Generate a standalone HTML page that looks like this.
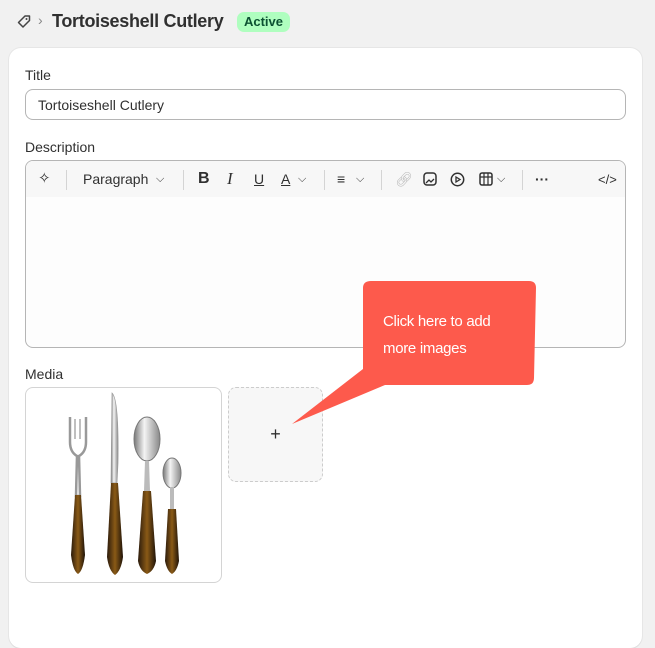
<!DOCTYPE html>
<html><head><meta charset="utf-8"><style>
*{box-sizing:border-box;margin:0;padding:0}
body{width:655px;height:596px;overflow:hidden;background:#f1f1f1;font-family:"Liberation Sans",sans-serif;color:#303030;position:relative}
.abs{position:absolute}
.card{left:9px;top:48px;width:633px;height:600px;background:#fff;border-radius:12px;box-shadow:0 1px 0 #ddd,0 0 0 1px #e6e6e6}
.lbl{font-size:14px;color:#303030}
.inp{left:25px;top:89px;width:601px;height:31px;border:1px solid #b5b5b5;border-radius:8px;font-size:14px;padding:7px 12px;color:#303030}
.ed{left:25px;top:160px;width:601px;height:188px;border:1px solid #b5b5b5;border-radius:8px;overflow:hidden;background:#fdfdfd}
.tb{height:36px;background:#f7f7f7;position:relative}
.sep{position:absolute;top:9px;width:1px;height:20px;background:#d4d4d4}
.tb span{position:absolute;top:10px;font-size:14px;color:#303030}
</style></head><body>
<svg class="abs" style="left:16px;top:14px" width="16" height="16" viewBox="0 0 16 16"><path d="M9 2h4.5v4.5L7 13 2.5 8.5z" fill="none" stroke="#444" stroke-width="1.5" stroke-linejoin="round"/><circle cx="10.5" cy="5" r="1" fill="#444"/></svg>
<div class="abs" style="left:38px;top:12px;font-size:14px;color:#888">›</div>
<div class="abs" style="left:52px;top:11px;font-size:18px;font-weight:bold;color:#303030;letter-spacing:-0.3px">Tortoiseshell Cutlery</div>
<div class="abs" style="left:237px;top:12px;width:53px;height:20px;background:#affebf;border-radius:7px;font-size:13px;font-weight:bold;color:#0c5132;text-align:center;line-height:20px">Active</div>
<div class="abs card"></div>
<div class="abs lbl" style="left:25px;top:67px">Title</div>
<div class="abs inp">Tortoiseshell Cutlery</div>
<div class="abs lbl" style="left:25px;top:139px">Description</div>
<div class="abs ed"><div class="tb">
<span style="left:12px;top:8px;font-size:15px">✧</span>
<div class="sep" style="left:40px"></div>
<span style="left:57px">Paragraph</span><span style="left:130px;font-size:11px;top:12px">⌵</span>
<div class="sep" style="left:157px"></div>
<span style="left:172px;font-weight:bold;font-size:16px;top:9px">B</span>
<span style="left:201px;font-style:italic;font-family:'Liberation Serif';font-size:17px;top:8px">I</span>
<span style="left:228px;text-decoration:underline">U</span>
<span style="left:255px;text-decoration:underline">A</span><span style="left:272px;font-size:11px;top:12px">⌵</span>
<div class="sep" style="left:298px"></div>
<span style="left:311px">≡</span><span style="left:330px;font-size:11px;top:12px">⌵</span>
<div class="sep" style="left:355px"></div>
<span style="left:369px;color:#bbb">🔗︎</span>
<svg class="abs" style="left:397px;top:11px" width="14" height="14"><rect x="1" y="1" width="12" height="12" rx="3" fill="none" stroke="#303030" stroke-width="1.5"/><path d="M3 11l3-3 2 2 3-3" fill="none" stroke="#303030" stroke-width="1.3"/></svg>
<svg class="abs" style="left:424px;top:11px" width="15" height="15"><circle cx="7.5" cy="7.5" r="6.2" fill="none" stroke="#303030" stroke-width="1.5"/><path d="M6 5v5l4-2.5z" fill="none" stroke="#303030" stroke-width="1.3"/></svg>
<svg class="abs" style="left:453px;top:11px" width="14" height="14"><rect x="1" y="1" width="12" height="12" rx="2" fill="none" stroke="#303030" stroke-width="1.5"/><path d="M1 5h12M5 1v12M9 1v12" stroke="#303030" stroke-width="1.2"/></svg>
<span style="left:471px;font-size:11px;top:12px">⌵</span>
<div class="sep" style="left:496px"></div>
<span style="left:509px;font-weight:bold">···</span>
<span style="left:572px;font-size:13px;top:11px">&lt;/&gt;</span>
</div></div>
<div class="abs lbl" style="left:25px;top:366px">Media</div>
<div class="abs" style="left:25px;top:387px;width:197px;height:196px;border:1px solid #d4d4d4;border-radius:8px;background:#fff"></div>
<svg class="abs" style="left:25px;top:387px" width="197" height="196">
<defs><linearGradient id="h" x1="0" x2="1"><stop offset="0" stop-color="#2a1a0c"/><stop offset=".5" stop-color="#8a5a16"/><stop offset="1" stop-color="#1f1308"/></linearGradient><linearGradient id="m" x1="0" x2="1"><stop offset="0" stop-color="#777"/><stop offset=".4" stop-color="#f4f4f4"/><stop offset="1" stop-color="#888"/></linearGradient></defs>
<path d="M45 30v25q0 10 7 14l-1 40h4l-1-40q7-4 7-14V30" fill="none" stroke="#999" stroke-width="2.5"/>
<path d="M50 32v20M55 32v20" stroke="#aaa" stroke-width="1.5"/>
<path d="M50 108h6l4 60q-2 16-7 19-5-3-7-19z" fill="url(#h)"/>
<path d="M87 6q7 6 6 70l-1 20h-6z" fill="url(#m)" stroke="#999" stroke-width=".7"/>
<path d="M86 96h7l5 74q-2 14-8 18-6-4-8-18z" fill="url(#h)"/>
<ellipse cx="122" cy="52" rx="13" ry="22" fill="url(#m)" stroke="#777"/>
<path d="M120 74h4l1 30h-6z" fill="#bbb"/>
<path d="M118 104h8l5 70q-2 10-9 13-7-3-9-13z" fill="url(#h)"/>
<ellipse cx="147" cy="86" rx="9" ry="15" fill="url(#m)" stroke="#777"/>
<path d="M145 100h4v22h-4z" fill="#bbb"/>
<path d="M143 122h8l3 52q-2 10-7 13-5-3-7-13z" fill="url(#h)"/>
</svg>
<div class="abs" style="left:228px;top:387px;width:95px;height:95px;border:1px dashed #ccc;border-radius:8px;background:#f7f7f7;text-align:center;line-height:93px;font-size:18px;color:#303030">+</div>
<svg class="abs" style="left:0;top:0" width="655" height="596"><path d="M371 281h158q7 0 7 7l-2 90q0 7-7 7H385L292 424l71-55V288q0-7 8-7z" fill="#fd5a4c"/></svg>
<div class="abs" style="left:383px;top:308px;color:#fff;font-size:15px;line-height:27px;letter-spacing:-.3px">Click here to add<br>more images</div>
</body></html>
